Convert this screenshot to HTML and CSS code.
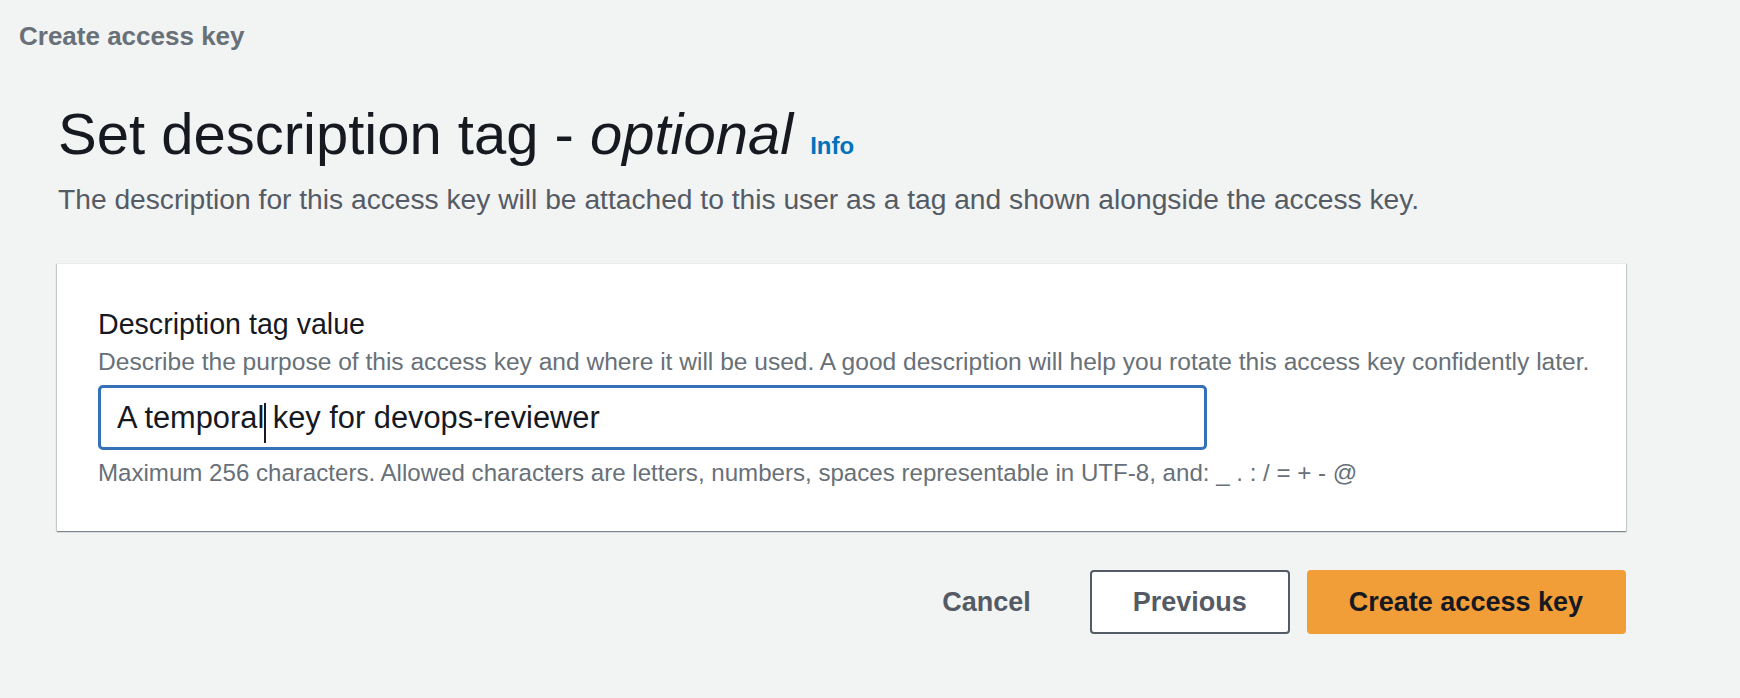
FILE: index.html
```html
<!DOCTYPE html>
<html lang="en">
<head>
<meta charset="utf-8">
<title>Create access key</title>
<link rel="stylesheet" href="styles.css">
</head>
<body>
<div class="page">
  <div class="breadcrumb">Create access key</div>
  <h1 class="title">Set description tag - <i>optional</i><a class="info" href="#">Info</a></h1>
  <p class="lead">The description for this access key will be attached to this user as a tag and shown alongside the access key.</p>

  <section class="card">
    <label class="label">Description tag value</label>
    <div class="hint">Describe the purpose of this access key and where it will be used. A good description will help you rotate this access key confidently later.</div>
    <div class="input">A temporal<span class="caret"></span> key for devops-reviewer</div>
    <div class="constraint">Maximum 256 characters. Allowed characters are letters, numbers, spaces representable in UTF-8, and: _ . : / = + - @</div>
  </section>

  <div class="actions">
    <button class="btn btn-link">Cancel</button>
    <button class="btn btn-normal">Previous</button>
    <button class="btn btn-primary">Create access key</button>
  </div>
</div>
</body>
</html>
```

FILE: styles.css
```css
html, body {
  margin: 0;
  padding: 0;
  background: #f2f3f3;
}

body {
  font-family: "Liberation Sans", Arial, sans-serif;
  color: #16191f;
  width: 1740px;
  height: 698px;
  overflow: hidden;
}

.page {
  padding: 20px 114px 0 57px;
}

.breadcrumb {
  margin-left: -38px;
  font-size: 26px;
  line-height: 32px;
  font-weight: 700;
  color: #687078;
}

.title {
  margin: 48px 0 0 1px;
  font-size: 58px;
  line-height: 68px;
  font-weight: 400;
  color: #16191f;
}

.title i {
  font-style: italic;
}

.info {
  margin-left: 17px;
  font-size: 24px;
  line-height: 24px;
  font-weight: 700;
  color: #0073bb;
  text-decoration: none;
}

.lead {
  margin: 14px 0 0 1px;
  font-size: 28.2px;
  line-height: 34px;
  color: #545b64;
  white-space: nowrap;
}

.card {
  margin-top: 47px;
  background: #ffffff;
  border-top: 1px solid #eaeded;
  box-shadow: 0 1px 1px 0 rgba(0, 28, 36, 0.3), 1px 1px 1px 0 rgba(0, 28, 36, 0.15), -1px 1px 1px 0 rgba(0, 28, 36, 0.15);
  padding: 43px 30px 43px 41px;
}

.label {
  display: block;
  font-size: 28.6px;
  line-height: 34px;
  color: #16191f;
}

.hint {
  margin-top: 6px;
  font-size: 24.55px;
  line-height: 30px;
  color: #687078;
  white-space: nowrap;
}

.input {
  margin-top: 8px;
  width: 1087px;
  height: 59px;
  border: 3px solid #3571b6;
  border-radius: 5px;
  padding-left: 16px;
  font-size: 30.8px;
  line-height: 59px;
  color: #16191f;
  white-space: nowrap;
  box-sizing: content-box;
}

.caret {
  display: inline-block;
  width: 0;
  height: 40px;
  border-left: 2px solid #16191f;
  margin-right: -2px;
  vertical-align: -15px;
}

.constraint {
  margin-top: 8px;
  font-size: 24.1px;
  line-height: 30px;
  color: #687078;
  white-space: nowrap;
}

.actions {
  margin-top: 39px;
  display: flex;
  justify-content: flex-end;
  gap: 17px;
}

.btn {
  font-family: "Liberation Sans", Arial, sans-serif;
  font-size: 27px;
  font-weight: 700;
  line-height: 60px;
  height: 64px;
  padding: 0 40px;
  border: 2px solid transparent;
  border-radius: 4px;
  background: transparent;
  cursor: pointer;
}

.btn-link {
  color: #545b64;
}

.btn-normal {
  background: #ffffff;
  border-color: #545b64;
  color: #545b64;
  padding: 0 41px;
}

.btn-primary {
  background: #f19d38;
  border-color: #f19d38;
  color: #16191f;
  padding: 0 41px 0 40px;
}
```
